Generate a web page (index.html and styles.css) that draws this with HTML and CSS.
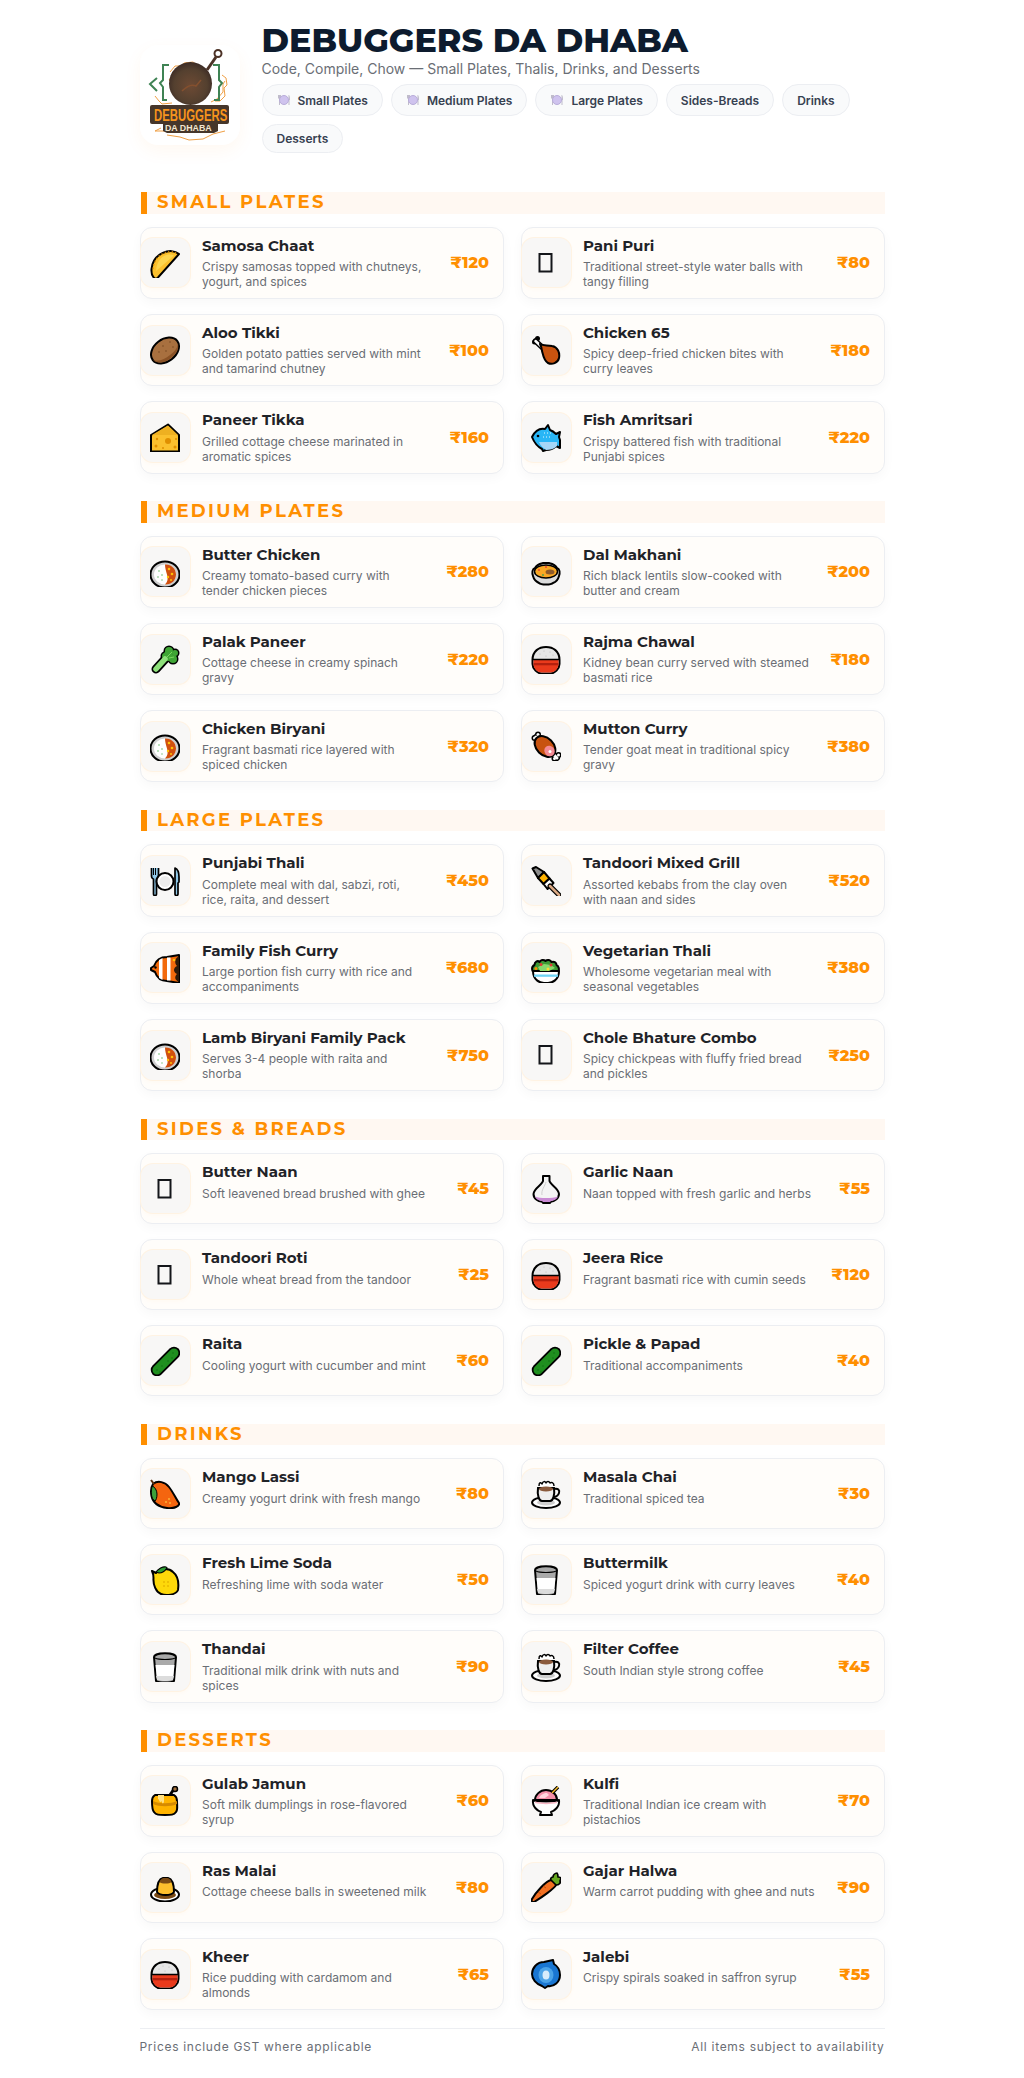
FILE: index.html
```html
<!DOCTYPE html>
<html lang="en">
    <head>
<meta charset="utf-8">
<title>Debuggers Da Dhaba</title>
<link rel="stylesheet" href="styles.css">
    </head>
    <body>
<!-- Food icons, 30 x 30 each -->
<svg class="sprite" xmlns="http://www.w3.org/2000/svg">
	<defs>
		<radialGradient id="pan-metal" cx="0.5" cy="0.55" r="0.55">
			<stop offset="0" stop-color="#6d4a34"/>
			<stop offset="0.7" stop-color="#54402f"/>
			<stop offset="1" stop-color="#3c2b25"/>
		</radialGradient>
	</defs>
	<symbol id="tofu" viewBox="0 0 30 30">
		<rect x="8.500" y="6" width="12" height="17.500" fill="none" stroke="#14161a" stroke-width="2"/>
	</symbol>
	<symbol id="samosa" viewBox="0 0 30 30">
		<path d="M29 6C21-1 3 5 1.500 21c-.3 4 1 8 3.500 9.500 1 .5 2 0 3-1z" fill="#fbc02d" stroke="#000" stroke-width="2" stroke-linejoin="round"/>
		<path d="M24 7.500C17 4 7 9 6 23z" fill="#fdd54f"/>
		<path d="M26 5C19 1 5 5 3 21" fill="none" stroke="#e08a00" stroke-width="1.500" stroke-dasharray="1 2.500"/>
	</symbol>
	<symbol id="potato" viewBox="0 0 30 30">
		<ellipse cx="15" cy="15.500" rx="15.500" ry="11" transform="rotate(-38 15 15.500)" fill="#a8703f" stroke="#000" stroke-width="2"/>
		<path d="M3 25c6 2 12-1 17-5 4-3 7-6 8-11 1 5-1 9-6 13-5 5-13 8-19 3z" fill="#8a5226"/>
		<g fill="#7a4a22"><circle cx="20" cy="7" r=".8"/><circle cx="13" cy="11" r=".8"/><circle cx="23" cy="12" r=".8"/><circle cx="9" cy="17" r=".8"/><circle cx="16" cy="16" r=".8"/></g>
	</symbol>
	<symbol id="cheese" viewBox="0 0 30 30">
		<path d="M1 13L18 2.500 29 13v16.500H1z" fill="#fbc02d" stroke="#000" stroke-width="2" stroke-linejoin="round"/>
		<path d="M2 13L18 3.500 28 13z" fill="#eeb021"/>
		<g fill="#e08f00"><circle cx="18" cy="19" r="3"/><circle cx="7" cy="17" r="1.200"/><circle cx="26" cy="17" r="1"/><circle cx="6" cy="24" r="1.500"/><circle cx="13" cy="26" r="1"/><circle cx="25" cy="25" r="1.500"/></g>
	</symbol>
	<symbol id="drumstick" viewBox="0 0 30 30">
		<path d="M4.500 6L13 14" stroke="#000" stroke-width="5.500" stroke-linecap="round"/>
		<circle cx="3.500" cy="7" r="2.500" fill="#000"/>
		<circle cx="6.500" cy="3.500" r="2.500" fill="#000"/>
		<path d="M4.500 6L13 14" stroke="#fff" stroke-width="2.500" stroke-linecap="round"/>
		<path d="M9 9c3 2 7 1 12 2 6 1 8 7 7 12-1 5-7 7-11 5-4-2-5-8-6-12-.3-3-1-5-2-7z" fill="#c8530f" stroke="#000" stroke-width="2" stroke-linejoin="round"/>
	</symbol>
	<symbol id="bluefish" viewBox="0 0 30 30">
		<path d="M1 15C4 9 9 6 14 7l3-4 2 5c3 1 5 3 6 4l4-2-1 5 1 3v8l-4-2c-3 3-7 4-10 4l-3 1-1-2C7 25 3 20 1 15z" fill="#29b6f6" stroke="#000" stroke-width="2" stroke-linejoin="round"/>
		<path d="M8 20h18v4c-3 3-7 4-11 4-3-2-6-5-7-8z" fill="#a5d6f7"/>
		<circle cx="7" cy="14" r="1.300" fill="#000"/>
		<path d="M13 11h1m2 0h1m2 0h1m-8 4h1m2 0h1m2 0h1" stroke="#e6f7ff" stroke-width="1"/>
	</symbol>
	<symbol id="curry" viewBox="0 0 30 30">
		<ellipse cx="15" cy="17.500" rx="14.500" ry="13" fill="#cfcfcf" stroke="#000" stroke-width="2"/>
		<ellipse cx="15" cy="17.500" rx="11" ry="10" fill="#fff"/>
		<path d="M15 7.500c6-.5 11 4 11 10s-5 10.500-11 10c3-3 3-6 2-10-1-3-2-7-2-10z" fill="#d1500f"/>
		<g fill="#ffc107"><circle cx="19" cy="12" r="1.300"/><circle cx="22" cy="17" r="1.300"/><circle cx="18" cy="20" r="1.200"/><circle cx="21" cy="23" r="1"/></g>
		<g fill="#66bb6a"><circle cx="9" cy="14" r=".8"/><circle cx="12" cy="18" r=".8"/><circle cx="8" cy="20" r=".8"/><circle cx="12" cy="23" r=".7"/></g>
	</symbol>
	<symbol id="stew" viewBox="0 0 30 30">
		<path d="M4 11c-3 1-3 5-2 8 1 4 4 6 6 7 2 2 12 2 14 0 3-1 5-3 6-7 1-3 1-7-2-8-2-4-6-4.500-8-5h-6c-2 .5-6 1-8 5z" fill="#dcdcdc" stroke="#000" stroke-width="2" stroke-linejoin="round"/>
		<ellipse cx="15" cy="14.500" rx="11.500" ry="6.500" fill="#f9a825" stroke="#000" stroke-width="1.500"/>
		<ellipse cx="19" cy="15" rx="4.500" ry="2.500" fill="#8d5a2b"/>
		<g fill="#e53935"><circle cx="15" cy="10" r=".9"/><circle cx="8" cy="13" r=".9"/></g>
		<circle cx="12" cy="18" r=".9" fill="#43a047"/>
	</symbol>
	<symbol id="leafy" viewBox="0 0 30 30">
		<path d="M6 25L17 13" stroke="#000" stroke-width="9" stroke-linecap="round"/>
		<g fill="#000"><circle cx="19" cy="7" r="5.500"/><circle cx="25" cy="9" r="4.500"/><circle cx="15" cy="12" r="4.500"/><circle cx="23" cy="15" r="5.500"/><circle cx="18" cy="12" r="6"/></g>
		<g fill="#3fa535"><circle cx="19" cy="7" r="4"/><circle cx="25" cy="9" r="3"/><circle cx="15" cy="12" r="3"/><circle cx="23" cy="15" r="4"/><circle cx="18" cy="12" r="5"/></g>
		<path d="M6 25L15 15" stroke="#8ee07a" stroke-width="5.500" stroke-linecap="round"/>
		<path d="M17 13l5-5m-3 6l5-1" stroke="#7ad85e" stroke-width="1" fill="none"/>
	</symbol>
	<symbol id="ricebowl" viewBox="0 0 30 30">
		<path d="M1.500 16C1.500 7 8 3 15 3s13.500 4 13.500 13v4c0 5-5 9.500-9 9.500h-9c-4 0-9-4.500-9-9.500z" fill="#e6e6e6" stroke="#000" stroke-width="2"/>
		<path d="M2.500 15.500h25v4.500c0 5-4.500 8.500-8 8.500h-9c-3.500 0-8-3.500-8-8.500z" fill="#ea3a1c"/>
		<path d="M2.500 19h25v2.300h-25z" fill="#b3200e"/>
		<path d="M2 15.500h26" stroke="#000" stroke-width="1.500"/>
		<g fill="#bdbdbd"><circle cx="9" cy="10" r=".6"/><circle cx="13" cy="7" r=".6"/><circle cx="19" cy="8" r=".6"/><circle cx="22" cy="11" r=".6"/><circle cx="15" cy="12" r=".6"/></g>
	</symbol>
	<symbol id="meat" viewBox="0 0 30 30">
		<path d="M5 6L26 27" stroke="#000" stroke-width="6" stroke-linecap="round"/>
		<g fill="#000"><circle cx="3.500" cy="7" r="3"/><circle cx="7" cy="3.500" r="3"/><circle cx="23.500" cy="27.500" r="3"/><circle cx="27.500" cy="24" r="3"/></g>
		<g fill="#fff"><circle cx="3.500" cy="7" r="1.500"/><circle cx="7" cy="3.500" r="1.500"/><circle cx="23.500" cy="27.500" r="1.500"/><circle cx="27.500" cy="24" r="1.500"/></g>
		<path d="M5 6L26 27" stroke="#fff" stroke-width="3" stroke-linecap="round"/>
		<ellipse cx="14" cy="15.500" rx="12" ry="8.500" transform="rotate(45 14 15.500)" fill="#c8530f" stroke="#000" stroke-width="2"/>
		<ellipse cx="18.500" cy="20" rx="5" ry="5.500" transform="rotate(-40 18.500 20)" fill="#f48a94"/>
		<circle cx="19" cy="20.500" r="1.500" fill="#fff"/>
	</symbol>
	<symbol id="thali" viewBox="0 0 30 30">
		<path d="M1.500 2v8c0 2 1.500 3 2 3v15c0 2 3 2 3 0V13c.5 0 2-1 2-3V2" fill="#90c8e8" stroke="#000" stroke-width="1.700" stroke-linejoin="round"/>
		<path d="M3.500 2v7m2-7v7" stroke="#000" stroke-width="1"/>
		<circle cx="15" cy="15.500" r="8.500" fill="#fff" stroke="#000" stroke-width="2"/>
		<circle cx="15" cy="15.500" r="5.500" fill="#ececec"/>
		<path d="M25 2c2.500 1 4 4 4 9v5l-1 1v11c0 2-3 2-3 0z" fill="#90c8e8" stroke="#000" stroke-width="1.700" stroke-linejoin="round"/>
	</symbol>
	<symbol id="skewer" viewBox="0 0 30 30">
		<path d="M1.500 2.500L5 1l8 5-6 6z" fill="#8c8c8c" stroke="#000" stroke-width="2" stroke-linejoin="round"/>
		<path d="M7 12l6-6 5.500 6.500-6 5.500z" fill="#ffb300" stroke="#000" stroke-width="2" stroke-linejoin="round"/>
		<path d="M12.500 18l6-5.500 4 4.500-6 6z" fill="#fff" stroke="#000" stroke-width="2" stroke-linejoin="round"/>
		<path d="M19 20l9 9" stroke="#000" stroke-width="5" stroke-linecap="round"/>
		<path d="M19 20l9 9" stroke="#d9a883" stroke-width="2.500" stroke-linecap="round"/>
	</symbol>
	<symbol id="orangefish" viewBox="0 0 30 30">
		<path d="M1 15l3-2c2-6 7-9 13-9l12-2v28l-12-2c-6 0-10-3-12-9l-4-2z" fill="#f26a0c" stroke="#000" stroke-width="2" stroke-linejoin="round"/>
		<path d="M9 7l3.500-2v22L9 25zM17 4.500h3.500v23H17z" fill="#fff"/>
		<path d="M29 3c-4 2-5 7-2 10-4 2-4 6 0 8-3 3-2 6 2 8z" fill="#2c1a0a"/>
		<circle cx="5.500" cy="14.500" r="1.200" fill="#000"/>
		<circle cx="24" cy="7" r="1.300" fill="#ffc107"/>
	</symbol>
	<symbol id="salad" viewBox="0 0 30 30">
		<path d="M2 18c0 9 7 12 11 12h4c4 0 11-3 11-12z" fill="#fff" stroke="#000" stroke-width="2" stroke-linejoin="round"/>
		<path d="M3 21.500h24v2.300H3z" fill="#6ed4f5"/>
		<path d="M1.500 18c-1-3 0-5 2-6 0-3 3-5 5-3 1-2 4-3 6-1 2-2 5-1 6 1 3-1 5 1 5 3 2 1 3 4 2 6z" fill="#3c9a34" stroke="#000" stroke-width="2" stroke-linejoin="round"/>
		<path d="M7 14l6-3 7 1 4 3-6 3H9z" fill="#86d96c"/>
		<g fill="#e53935"><circle cx="10" cy="11.500" r="1.500"/><circle cx="20" cy="12" r="1.500"/></g>
		<circle cx="5" cy="15.500" r="1.500" fill="#fb8c00"/>
		<circle cx="17" cy="16" r="1.500" fill="#fdd835"/>
	</symbol>
	<symbol id="garlic" viewBox="0 0 30 30">
		<path d="M12 2h6.500v5c1 4 9 7 9.500 13 0 5-6 8-8 7.500l-1 1.500h-7l-1-1.500C8 28 2.500 25 2.500 20 3 14 11 11 12 7z" fill="#f4f4f4" stroke="#000" stroke-width="2" stroke-linejoin="round"/>
		<path d="M4 22.500c5 2 17 2 23 0-1 3-5 4.500-7 4.500l-1 1h-7l-1-1c-2 0-6-1.500-7-4.500z" fill="#c98ad4"/>
		<path d="M15 8c-1 4-5 8-4 13" stroke="#cfcfcf" stroke-width="1" fill="none"/>
	</symbol>
	<symbol id="cucumber" viewBox="0 0 30 30">
		<path d="M7 24L24 7" stroke="#000" stroke-width="12.500" stroke-linecap="round"/>
		<path d="M7 24L24 7" stroke="#1f8f1f" stroke-width="9" stroke-linecap="round"/>
		<g fill="#0f6b14"><circle cx="7" cy="24" r=".7"/><circle cx="12" cy="20" r=".7"/><circle cx="10" cy="26" r=".7"/><circle cx="18" cy="15" r=".7"/><circle cx="23" cy="7" r=".7"/><circle cx="22" cy="12" r=".7"/></g>
	</symbol>
	<symbol id="mango" viewBox="0 0 30 30">
		<path d="M3 5c5-4 12-2 16 3 4 5 7 12 10 16 1 3-5 6-12 5C9 28 3 24 1.500 17 .5 12 1 8 3 5z" fill="#f4650f" stroke="#000" stroke-width="2" stroke-linejoin="round"/>
		<path d="M2.500 7c2 1 4.500 4 4.500 8s-1 6-2 7c-2-1-3-3-3.500-6C1 12 1.500 9 2.500 7z" fill="#3aa13a" stroke="#000" stroke-width="1"/>
		<path d="M1 1l3 4" stroke="#5a2e0c" stroke-width="2"/>
		<g fill="#fbb034"><circle cx="19" cy="20" r="1"/><circle cx="16" cy="23" r="1"/><circle cx="20" cy="24" r="1"/></g>
	</symbol>
	<symbol id="lemon" viewBox="0 0 30 30">
		<path d="M2 6l4 2c5-5 13-5 17-1 5 4 6 11 5 18-2 5-12 6-17 4C6 27 3 20 3.500 13c0-2-.5-5-1.500-7z" fill="#fdd80a" stroke="#000" stroke-width="2" stroke-linejoin="round"/>
		<path d="M6 7c2-3 7-6 10-5 1 0 1 1 1 1-2 3-5 5-8 5z" fill="#2f9e35" stroke="#000" stroke-width="1.200"/>
		<g fill="#e8b800"><circle cx="14" cy="17" r="1"/><circle cx="18" cy="17" r="1"/><circle cx="14" cy="21" r="1"/><circle cx="18" cy="21" r="1"/></g>
	</symbol>
	<symbol id="milk" viewBox="0 0 30 30">
		<path d="M4 5c0-5 22-5 22 0l-2 24c-3 2-15 2-18 0z" fill="#a9a9a9" stroke="#000" stroke-width="2" stroke-linejoin="round"/>
		<path d="M5.500 13h19L23 27.500c-3 1.500-13 1.500-16 0z" fill="#fff"/>
		<path d="M6 24h18L23 27.500c-3 1.500-13 1.500-16 0z" fill="#dcdcdc"/>
		<path d="M5 6c4 2 16 2 20 0" stroke="#000" stroke-width="1.200" fill="none"/>
	</symbol>
	<symbol id="coffee" viewBox="0 0 30 30">
		<ellipse cx="15" cy="23.500" rx="14" ry="5.500" fill="#fff" stroke="#000" stroke-width="2"/>
		<ellipse cx="15" cy="23.500" rx="9" ry="3" fill="#cfcfcf"/>
		<path d="M7 9c-1 7 1 13 4 13h8c3 0 5-6 4-13z" fill="#efefef" stroke="#000" stroke-width="2"/>
		<path d="M23 10c4-1 6 1 5 4-1 3-4 4-6 4" fill="none" stroke="#000" stroke-width="2"/>
		<ellipse cx="15" cy="10" rx="7" ry="2.500" fill="#8a5a3c"/>
		<path d="M8 7c0-4 2-4 3-2 1-3 3-3 4-1 1-2 3-2 4 0 1-1 4-1 4 3" fill="#fff" stroke="#000" stroke-width="1.500" stroke-linejoin="round"/>
	</symbol>
	<symbol id="honey" viewBox="0 0 30 30">
		<path d="M5 9c-3 2-3 4-3 6 0 5 0 9 2 11 2 3 5 3 11 3s9 0 11-3c2-2 1-6 1-11 0-2 0-4-3-6z" fill="#ffb300" stroke="#000" stroke-width="2" stroke-linejoin="round"/>
		<path d="M3 15c6 3 18 3 24 0v3c-6 3-18 3-24 0z" fill="#d68a00"/>
		<path d="M8 9h6v6c0 3-2 3-2 1-1-2-1 1-2 0-1-1-1-3-2-3z" fill="#ffe082"/>
		<path d="M20 9l4-6" stroke="#000" stroke-width="3"/>
		<circle cx="25" cy="3" r="2.500" fill="#a0703c" stroke="#000" stroke-width="1.500"/>
	</symbol>
	<symbol id="shavedice" viewBox="0 0 30 30">
		<path d="M4 14c0-5 5-10 11-10s11 4 11 10z" fill="#f48fa8" stroke="#000" stroke-width="2" stroke-linejoin="round"/>
		<path d="M8 12c1-3 5-5 8-5l2 2-4 3z" fill="#ffd5dd"/>
		<path d="M21 7l6-6" stroke="#000" stroke-width="3.500"/>
		<path d="M21 7l6-6" stroke="#fbc02d" stroke-width="1.500"/>
		<path d="M2 14c-1 7 5 11 8 12l-1 3h12l-1-3c3-1 9-5 8-12-5 2-21 2-26 0z" fill="#fff" stroke="#000" stroke-width="2" stroke-linejoin="round"/>
		<path d="M4 15.500c6 1.500 16 1.500 22 0v1.500c-6 1.500-16 1.500-22 0z" fill="#f7b6c4"/>
	</symbol>
	<symbol id="flan" viewBox="0 0 30 30">
		<ellipse cx="15" cy="22.500" rx="14" ry="7" fill="#fff" stroke="#000" stroke-width="2"/>
		<ellipse cx="15" cy="23" rx="11" ry="4" fill="#7a4a14"/>
		<path d="M7 20c0-8 2-13 6-14h5c4 1 6 6 6 14-3 4-14 4-17 0z" fill="#fdbf2d" stroke="#000" stroke-width="2" stroke-linejoin="round"/>
		<path d="M9.500 10c1-3 3-4 4-4h4c1 0 3 1 4 4-2 2-10 2-12 0z" fill="#7a4a14"/>
	</symbol>
	<symbol id="carrot" viewBox="0 0 30 30">
		<path d="M20 8c2 0 5 3 5 5-1 3-15 13-22 17C1 30 0 29 1 27 5 20 15 9 20 8z" fill="#f26f21" stroke="#000" stroke-width="2" stroke-linejoin="round"/>
		<path d="M20 8c-1-2 1-3 2-3 0-2 2-4 4-4 1 1 1 2 1 4 2 0 3 1 3 2-1 1-1 1-1 2 1 2-1 4-4 4z" fill="#66a81f" stroke="#000" stroke-width="1.700" stroke-linejoin="round"/>
		<path d="M12 14l3 2m-8 4l3 2" stroke="#c2500e" stroke-width="1"/>
	</symbol>
	<symbol id="cyclone" viewBox="0 0 30 30">
		<path d="M22 1l1 4c5 3 6 8 6 11 0 7-6 12-12 11l-3 2-3-2c-6-2-10-7-10-12C1 9 6 3 13 3z" fill="#1976d2" stroke="#000" stroke-width="2" stroke-linejoin="round"/>
		<ellipse cx="15" cy="16" rx="7.500" ry="8" fill="#4aa3e8"/>
		<ellipse cx="15" cy="16" rx="3.500" ry="4.500" fill="#d6ecfb"/>
	</symbol>
	<symbol id="chipplate" viewBox="0 0 14 14">
		<path d="M1 2v3l1 1v6h1V6l1-1V2zM12 2c1 1 1 3 1 5h-.5v5h-1V2z" fill="#c0bccb"/>
		<circle cx="7" cy="7" r="4.500" fill="#cfc3ee" stroke="#b9add9" stroke-width="1"/>
	</symbol>
</svg>

        <div class="wrapper">
<header class="masthead">
	<div class="logo">
		<svg viewBox="0 0 100 100" width="100" height="100">
			<g fill="none" stroke="#ef9f45" stroke-width="1">
				<path d="M30 27l5-6 6 0 3-3 9-1 4 3"/>
				<path d="M33 39l-4-4 9-11 8-2"/>
				<path d="M15 51l4 5 3 3 10-1"/>
				<path d="M82 30l4 3 1 7-3 3 1 8-5 5-5 0"/>
				<path d="M85 36l-2 3 0 8-6 7-6 3"/>
				<path d="M21 83l-6 3 10 0"/>
				<path d="M27 90l13 2 9 3 14-1 10-5 12-3"/>
			</g>
			<g fill="none" stroke="#3f8354" stroke-width="2">
				<path d="M17 33l-7 6 7 7"/>
				<path d="M29 20l-6 0 0 15 -3 3 3 4 0 13 4 0"/>
				<path d="M73 20l6 0 0 15 3 3 -3 4 0 13 -5 0"/>
			</g>
			<path d="M67 25L76 12" stroke="#4c3226" stroke-width="3"/>
			<circle cx="78" cy="8.500" r="3.500" fill="none" stroke="#4c3226" stroke-width="2"/>
			<circle cx="50.500" cy="38.500" r="21.500" fill="url(#pan-metal)"/>
			<path d="M42 46q8-8 14-5l5-6" stroke="#84502f" stroke-width="1.500" fill="none"/>
			<rect x="10" y="60" width="79" height="19" rx="2" fill="#46362a"/>
			<path d="M23 78h55v8l-4 2H27l-4-2z" fill="#46362a"/>
			<text transform="translate(14 75.500) scale(.67 1)" class="logo-big">DEBUGGERS</text>
			<text transform="translate(25 86) scale(.95 1)" class="logo-small">DA DHABA</text>
		</svg>
	</div>
	<div class="intro">
		<h1>DEBUGGERS DA DHABA</h1>
		<p class="tagline">Code, Compile, Chow — Small Plates, Thalis, Drinks, and Desserts</p>
		<nav class="chips">
			<a class="chip"><svg class="chip-icon"><use href="#chipplate"/></svg>Small Plates</a>
			<a class="chip"><svg class="chip-icon"><use href="#chipplate"/></svg>Medium Plates</a>
			<a class="chip"><svg class="chip-icon"><use href="#chipplate"/></svg>Large Plates</a>
			<a class="chip">Sides-Breads</a>
			<a class="chip">Drinks</a>
			<a class="chip">Desserts</a>
		</nav>
	</div>
</header>

<section class="menu-section">
	<h2>SMALL PLATES</h2>
	<div class="items">
		<div class="item"><div class="icon"><svg><use href="#samosa"/></svg></div><div class="info"><h3>Samosa Chaat</h3><p>Crispy samosas topped with chutneys, yogurt, and spices</p></div><div class="price">₹120</div></div>
		<div class="item"><div class="icon"><svg><use href="#tofu"/></svg></div><div class="info"><h3>Pani Puri</h3><p>Traditional street-style water balls with tangy filling</p></div><div class="price">₹80</div></div>
		<div class="item"><div class="icon"><svg><use href="#potato"/></svg></div><div class="info"><h3>Aloo Tikki</h3><p>Golden potato patties served with mint and tamarind chutney</p></div><div class="price">₹100</div></div>
		<div class="item"><div class="icon"><svg><use href="#drumstick"/></svg></div><div class="info"><h3>Chicken 65</h3><p>Spicy deep-fried chicken bites with curry leaves</p></div><div class="price">₹180</div></div>
		<div class="item"><div class="icon"><svg><use href="#cheese"/></svg></div><div class="info"><h3>Paneer Tikka</h3><p>Grilled cottage cheese marinated in aromatic spices</p></div><div class="price">₹160</div></div>
		<div class="item"><div class="icon"><svg><use href="#bluefish"/></svg></div><div class="info"><h3>Fish Amritsari</h3><p>Crispy battered fish with traditional Punjabi spices</p></div><div class="price">₹220</div></div>
	</div>
</section>

<section class="menu-section">
	<h2>MEDIUM PLATES</h2>
	<div class="items">
		<div class="item"><div class="icon"><svg><use href="#curry"/></svg></div><div class="info"><h3>Butter Chicken</h3><p>Creamy tomato-based curry with tender chicken pieces</p></div><div class="price">₹280</div></div>
		<div class="item"><div class="icon"><svg><use href="#stew"/></svg></div><div class="info"><h3>Dal Makhani</h3><p>Rich black lentils slow-cooked with butter and cream</p></div><div class="price">₹200</div></div>
		<div class="item"><div class="icon"><svg><use href="#leafy"/></svg></div><div class="info"><h3>Palak Paneer</h3><p>Cottage cheese in creamy spinach gravy</p></div><div class="price">₹220</div></div>
		<div class="item"><div class="icon"><svg><use href="#ricebowl"/></svg></div><div class="info"><h3>Rajma Chawal</h3><p>Kidney bean curry served with steamed basmati rice</p></div><div class="price">₹180</div></div>
		<div class="item"><div class="icon"><svg><use href="#curry"/></svg></div><div class="info"><h3>Chicken Biryani</h3><p>Fragrant basmati rice layered with spiced chicken</p></div><div class="price">₹320</div></div>
		<div class="item"><div class="icon"><svg><use href="#meat"/></svg></div><div class="info"><h3>Mutton Curry</h3><p>Tender goat meat in traditional spicy gravy</p></div><div class="price">₹380</div></div>
	</div>
</section>

<section class="menu-section">
	<h2>LARGE PLATES</h2>
	<div class="items">
		<div class="item"><div class="icon"><svg><use href="#thali"/></svg></div><div class="info"><h3>Punjabi Thali</h3><p>Complete meal with dal, sabzi, roti, rice, raita, and dessert</p></div><div class="price">₹450</div></div>
		<div class="item"><div class="icon"><svg><use href="#skewer"/></svg></div><div class="info"><h3>Tandoori Mixed Grill</h3><p>Assorted kebabs from the clay oven with naan and sides</p></div><div class="price">₹520</div></div>
		<div class="item"><div class="icon"><svg><use href="#orangefish"/></svg></div><div class="info"><h3>Family Fish Curry</h3><p>Large portion fish curry with rice and accompaniments</p></div><div class="price">₹680</div></div>
		<div class="item"><div class="icon"><svg><use href="#salad"/></svg></div><div class="info"><h3>Vegetarian Thali</h3><p>Wholesome vegetarian meal with seasonal vegetables</p></div><div class="price">₹380</div></div>
		<div class="item"><div class="icon"><svg><use href="#curry"/></svg></div><div class="info"><h3>Lamb Biryani Family Pack</h3><p>Serves 3-4 people with raita and shorba</p></div><div class="price">₹750</div></div>
		<div class="item"><div class="icon"><svg><use href="#tofu"/></svg></div><div class="info"><h3>Chole Bhature Combo</h3><p>Spicy chickpeas with fluffy fried bread and pickles</p></div><div class="price">₹250</div></div>
	</div>
</section>

<section class="menu-section">
	<h2>SIDES &amp; BREADS</h2>
	<div class="items">
		<div class="item"><div class="icon"><svg><use href="#tofu"/></svg></div><div class="info"><h3>Butter Naan</h3><p>Soft leavened bread brushed with ghee</p></div><div class="price">₹45</div></div>
		<div class="item"><div class="icon"><svg><use href="#garlic"/></svg></div><div class="info"><h3>Garlic Naan</h3><p>Naan topped with fresh garlic and herbs</p></div><div class="price">₹55</div></div>
		<div class="item"><div class="icon"><svg><use href="#tofu"/></svg></div><div class="info"><h3>Tandoori Roti</h3><p>Whole wheat bread from the tandoor</p></div><div class="price">₹25</div></div>
		<div class="item"><div class="icon"><svg><use href="#ricebowl"/></svg></div><div class="info"><h3>Jeera Rice</h3><p>Fragrant basmati rice with cumin seeds</p></div><div class="price">₹120</div></div>
		<div class="item"><div class="icon"><svg><use href="#cucumber"/></svg></div><div class="info"><h3>Raita</h3><p>Cooling yogurt with cucumber and mint</p></div><div class="price">₹60</div></div>
		<div class="item"><div class="icon"><svg><use href="#cucumber"/></svg></div><div class="info"><h3>Pickle &amp; Papad</h3><p>Traditional accompaniments</p></div><div class="price">₹40</div></div>
	</div>
</section>

<section class="menu-section">
	<h2>DRINKS</h2>
	<div class="items">
		<div class="item"><div class="icon"><svg><use href="#mango"/></svg></div><div class="info"><h3>Mango Lassi</h3><p>Creamy yogurt drink with fresh mango</p></div><div class="price">₹80</div></div>
		<div class="item"><div class="icon"><svg><use href="#coffee"/></svg></div><div class="info"><h3>Masala Chai</h3><p>Traditional spiced tea</p></div><div class="price">₹30</div></div>
		<div class="item"><div class="icon"><svg><use href="#lemon"/></svg></div><div class="info"><h3>Fresh Lime Soda</h3><p>Refreshing lime with soda water</p></div><div class="price">₹50</div></div>
		<div class="item"><div class="icon"><svg><use href="#milk"/></svg></div><div class="info"><h3>Buttermilk</h3><p>Spiced yogurt drink with curry leaves</p></div><div class="price">₹40</div></div>
		<div class="item"><div class="icon"><svg><use href="#milk"/></svg></div><div class="info"><h3>Thandai</h3><p>Traditional milk drink with nuts and spices</p></div><div class="price">₹90</div></div>
		<div class="item"><div class="icon"><svg><use href="#coffee"/></svg></div><div class="info"><h3>Filter Coffee</h3><p>South Indian style strong coffee</p></div><div class="price">₹45</div></div>
	</div>
</section>

<section class="menu-section">
	<h2>DESSERTS</h2>
	<div class="items">
		<div class="item"><div class="icon"><svg><use href="#honey"/></svg></div><div class="info"><h3>Gulab Jamun</h3><p>Soft milk dumplings in rose-flavored syrup</p></div><div class="price">₹60</div></div>
		<div class="item"><div class="icon"><svg><use href="#shavedice"/></svg></div><div class="info"><h3>Kulfi</h3><p>Traditional Indian ice cream with pistachios</p></div><div class="price">₹70</div></div>
		<div class="item"><div class="icon"><svg><use href="#flan"/></svg></div><div class="info"><h3>Ras Malai</h3><p>Cottage cheese balls in sweetened milk</p></div><div class="price">₹80</div></div>
		<div class="item"><div class="icon"><svg><use href="#carrot"/></svg></div><div class="info"><h3>Gajar Halwa</h3><p>Warm carrot pudding with ghee and nuts</p></div><div class="price">₹90</div></div>
		<div class="item"><div class="icon"><svg><use href="#ricebowl"/></svg></div><div class="info"><h3>Kheer</h3><p>Rice pudding with cardamom and almonds</p></div><div class="price">₹65</div></div>
		<div class="item"><div class="icon"><svg><use href="#cyclone"/></svg></div><div class="info"><h3>Jalebi</h3><p>Crispy spirals soaked in saffron syrup</p></div><div class="price">₹55</div></div>
	</div>
</section>

<footer class="foot">
	<span>Prices include GST where applicable</span>
	<span>All items subject to availability</span>
</footer>
        </div>
    </body>
</html>
```
FILE: styles.css
```css
/* Page */
* {
    box-sizing: border-box;
}
body {
    margin: 0;
    background: #fff;
    color: #1f2328;
    font-family: Inter, "Noto Sans", sans-serif;
}
/* Holds the icon symbols only - draw nothing */
.sprite {
    width: 0;
    height: 0;
    overflow: hidden;
    position: absolute;
}
.wrapper {
    width: 745px;
    margin: 0 auto;
    padding-top: 20px;
}
/* Masthead */
.masthead {
    display: flex;
    align-items: flex-start;
    gap: 22px;
    margin-bottom: 39px;
}
.logo {
    flex: none;
    width: 100px;
    height: 100px;
    margin-top: 25px;
    border-radius: 18px;
    background: #fff;
    box-shadow: 0 6px 18px rgba(255, 143, 0, 0.06);
}
.logo-big {
    font: 700 17px "Liberation Sans", sans-serif;
    fill: #f7941d;
}
.logo-small {
    font: 700 9.300px "Liberation Sans", sans-serif;
    fill: #f3e6d0;
}
.intro {
    flex: 1;
    min-width: 0;
}
h1 {
    margin: 0;
    color: #0d1b2e;
    font: 800 33.300px Montserrat, Inter, sans-serif;
}
.tagline {
    margin: 0 0 7px;
    color: #6a6e75;
    font-size: 14px;
    line-height: 17px;
}
.chips {
    display: flex;
    flex-wrap: wrap;
    gap: 8px;
}
.chip {
    display: flex;
    align-items: center;
    gap: 7px;
    padding: 6px 14px;
    border: 1px solid #eceef2;
    border-radius: 999px;
    background: #f9fafb;
    color: #374151;
    font-size: 12px;
    font-weight: 600;
    line-height: 15px;
}
.chip-icon {
    flex: none;
    width: 14px;
    height: 18px;
}
/* Sections */
.menu-section {
    margin-bottom: 27.300px;
}
.menu-section:last-of-type {
    margin-bottom: 18px;
}
h2 {
    margin: 0 0 13px 1.500px;
    padding-left: 10px;
    border-left: 6px solid #ff8f00;
    background: #fff8f2;
    color: #ff8f00;
    font: 700 18px/21.700px Montserrat, Inter, sans-serif;
    letter-spacing: 2.300px;
}
/* Menu cards */
.items {
    display: grid;
    grid-template-columns: 364px 364px;
    column-gap: 17px;
    row-gap: 15px;
}
.item {
    display: flex;
    align-items: center;
    min-height: 71px;
    padding: 9px 13.500px 9px 0;
    border: 1px solid #eceef2;
    border-radius: 12px;
    background: #fffdfa;
    box-shadow: 0 4px 12px rgba(0, 0, 0, 0.03);
}
.icon {
    flex: none;
    display: flex;
    align-items: center;
    justify-content: center;
    width: 49px;
    height: 49px;
    margin-right: 12.500px;
    border-radius: 12px;
    background: #f8f7f6;
    box-shadow: 0 0 0 1px #fff3e3, 0 2px 4px rgba(255, 143, 0, 0.04);
}
.icon svg {
    display: block;
    width: 30px;
    height: 30px;
}
.info {
    flex: 1;
    align-self: flex-start;
    min-width: 0;
}
h3 {
    margin: 0;
    color: #1f2328;
    font: 700 15px/18px Montserrat, Inter, sans-serif;
}
.info p {
    margin: 4.300px 0 0;
    color: #6a6e75;
    font-size: 12px;
    line-height: 15px;
}
.price {
    flex: none;
    margin-left: 18px;
    color: #ff8f00;
    font: 800 16px Montserrat, Inter, sans-serif;
}
/* Footer */
.foot {
    display: flex;
    justify-content: space-between;
    padding-top: 10px;
    border-top: 1px solid #eceef2;
    color: #6a6e75;
    font-size: 12px;
    letter-spacing: 0.700px;
}
```
